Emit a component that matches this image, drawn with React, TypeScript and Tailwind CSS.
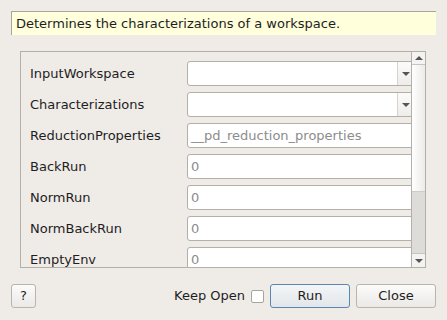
const font = { fontFamily: '"DejaVu Sans", Verdana, sans-serif' };

const rows: { label: string; kind: 'combo' | 'text'; placeholder?: string }[] = [
  { label: 'InputWorkspace', kind: 'combo' },
  { label: 'Characterizations', kind: 'combo' },
  { label: 'ReductionProperties', kind: 'text', placeholder: '__pd_reduction_properties' },
  { label: 'BackRun', kind: 'text', placeholder: '0' },
  { label: 'NormRun', kind: 'text', placeholder: '0' },
  { label: 'NormBackRun', kind: 'text', placeholder: '0' },
  { label: 'EmptyEnv', kind: 'text', placeholder: '0' },
];

function Arrow({ up }: { up?: boolean }) {
  return (
    <svg width="8" height="4" viewBox="0 0 8 4">
      {up ? <path d="M0 4 L4 0 L8 4 Z" fill="#555" /> : <path d="M0 0 L8 0 L4 4 Z" fill="#555" />}
    </svg>
  );
}

function Field({ kind, placeholder }: { kind: 'combo' | 'text'; placeholder?: string }) {
  if (kind === 'combo') {
    return (
      <div className="flex h-[25px] w-[240px] shrink-0 rounded-[3px] border border-[#b3afa9] bg-white">
        <div className="w-[209px]" />
        <div className="flex w-[16px] items-center justify-center border-l border-[#d6d3ce] bg-gradient-to-b from-[#fbfbfa] to-[#efedea]">
          <Arrow />
        </div>
      </div>
    );
  }
  return (
    <div className="flex h-[25px] w-[240px] shrink-0 items-center rounded-[3px] border border-[#b3afa9] bg-white pl-[3px] text-[13px] text-[#8c8c8c]">
      {placeholder}
    </div>
  );
}

function Button({ children, primary, className }: { children: React.ReactNode; primary?: boolean; className?: string }) {
  return (
    <div
      className={
        'flex h-[24px] items-center justify-center rounded-[3px] border text-[13px] text-[#1e1e1e] ' +
        (primary
          ? 'border-[#5b86ad] bg-gradient-to-b from-[#f3f5f7] to-[#e2e6ea] '
          : 'border-[#b8b4ae] bg-gradient-to-b from-[#fbfbfa] to-[#ebe9e6] ') +
        (className ?? '')
      }
    >
      {children}
    </div>
  );
}

export default function App() {
  return (
    <div className="flex h-[320px] w-[447px] flex-col bg-[#efebe7] pt-[11px] text-[#1e1e1e]" style={font}>
      <div className="mx-[11px] flex h-[24px] items-center border-l border-t border-[#a8a59f] bg-[#ffffdc] pl-[4px] text-[13px]">
        Determines the characterizations of a workspace.
      </div>

      <div className="ml-[20px] mt-[16px] flex h-[217px] w-[406px] border border-[#b3afa9]">
        <div className="flex min-w-0 flex-1 flex-col gap-[6px] overflow-hidden pl-[9px] pt-[9px]">
          {rows.map((r) => (
            <div key={r.label} className="flex h-[25px] shrink-0 items-center">
              <div className="w-[157px] shrink-0 text-[13px]">{r.label}</div>
              <Field kind={r.kind} placeholder={r.placeholder} />
            </div>
          ))}
        </div>
        <div className="flex w-[14px] shrink-0 flex-col border-l border-[#b3afa9] bg-[#dedcd8]">
          <div className="flex h-[13px] items-center justify-center border-b border-[#c8c5c0] bg-[#f4f3f1]">
            <Arrow up />
          </div>
          <div className="h-[127px] border-b border-[#cfccc7] bg-gradient-to-r from-[#ffffff] to-[#ecebe8]" />
          <div className="flex-1" />
          <div className="flex h-[14px] items-center justify-center border-t border-[#c8c5c0] bg-[#f4f3f1]">
            <Arrow />
          </div>
        </div>
      </div>

      <div className="mt-[16px] flex items-center px-[11px]">
        <Button className="w-[25px]">?</Button>
        <div className="ml-auto flex items-center">
          <span className="text-[13px]">Keep Open</span>
          <div className="ml-[6px] h-[13px] w-[13px] rounded-[2px] border border-[#a8a59f] bg-white" />
          <Button primary className="ml-[6px] w-[80px]">Run</Button>
          <Button className="ml-[6px] w-[80px]">Close</Button>
        </div>
      </div>
    </div>
  );
}
